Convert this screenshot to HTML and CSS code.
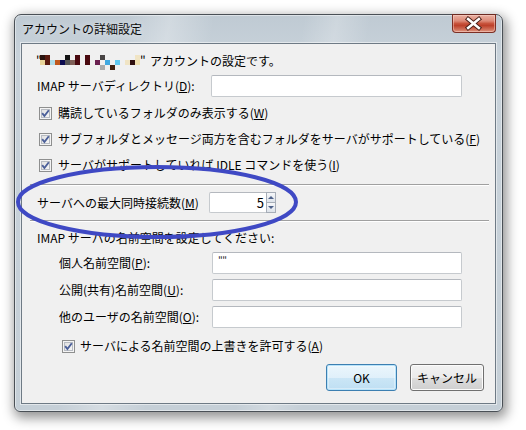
FILE: index.html
```html
<!DOCTYPE html>
<html lang="ja">
<head>
<meta charset="utf-8">
<title>アカウントの詳細設定</title>
<link rel="stylesheet" href="styles.css">
</head>
<body>
<div class="window">
  <div class="titlebar">
    <span class="title">アカウントの詳細設定</span>
    <div class="close">
      <svg width="44" height="19" viewBox="0 0 44 19">
        <path d="M16.5 5 L27.5 14 M27.5 5 L16.5 14" stroke="#4a2018" stroke-width="4.6" stroke-linecap="square" fill="none"/>
        <path d="M16.5 5 L27.5 14 M27.5 5 L16.5 14" stroke="#ffffff" stroke-width="2.6" stroke-linecap="square" fill="none"/>
      </svg>
    </div>
  </div>
  <div class="client">
    <div class="acct">
      <span class="q">"</span>
      <svg class="mosaic" width="100" height="15" viewBox="0 0 100 15">
        <rect x="0" y="0" width="5" height="5" fill="#2a1410"/>
        <rect x="5" y="0" width="5" height="5" fill="#5a1a10"/>
        <rect x="25" y="0" width="5" height="5" fill="#141414"/>
        <rect x="35" y="0" width="5" height="5" fill="#4a0a10"/>
        <rect x="45" y="0" width="5" height="5" fill="#4a0a10"/>
        <rect x="60" y="0" width="5" height="5" fill="#484444"/>
        <rect x="95" y="0" width="5" height="5" fill="#f0e4c4"/>
        <rect x="0" y="5" width="5" height="5" fill="#e8d49a"/>
        <rect x="5" y="5" width="5" height="5" fill="#5a1a10"/>
        <rect x="10" y="5" width="5" height="5" fill="#b0dce8"/>
        <rect x="15" y="5" width="5" height="5" fill="#c0581c"/>
        <rect x="20" y="5" width="5" height="5" fill="#0c0c50"/>
        <rect x="25" y="5" width="5" height="5" fill="#555555"/>
        <rect x="30" y="5" width="5" height="5" fill="#806058"/>
        <rect x="35" y="5" width="5" height="5" fill="#4a0a10"/>
        <rect x="45" y="5" width="5" height="5" fill="#4a0a10"/>
        <rect x="55" y="5" width="5" height="5" fill="#6a2050"/>
        <rect x="65" y="5" width="5" height="5" fill="#40a8e0"/>
        <rect x="75" y="5" width="5" height="5" fill="#60c8f0"/>
        <rect x="85" y="5" width="5" height="5" fill="#f0e4c4"/>
        <rect x="90" y="5" width="5" height="5" fill="#301010"/>
        <rect x="95" y="5" width="5" height="5" fill="#f0e0b0"/>
        <rect x="60" y="10" width="5" height="5" fill="#aaaaaa"/>
        <rect x="70" y="10" width="5" height="5" fill="#402010"/>
      </svg>
      <span class="q">"</span><span class="acct-text">アカウントの設定です。</span>
    </div>

    <div class="field-row">
      <span class="label label-dir">IMAP サーバディレクトリ(<u>D</u>):</span>
      <div class="input input-dir"></div>
    </div>

    <div class="cb-row first">
      <span class="cb"><svg width="11" height="11" viewBox="0 0 11 11"><path d="M2.2 5.2 L4.4 8 L8.8 2.2" stroke="#4b5f99" stroke-width="1.9" fill="none"/></svg></span>
      <span>購読しているフォルダのみ表示する(<u>W</u>)</span>
    </div>
    <div class="cb-row">
      <span class="cb"><svg width="11" height="11" viewBox="0 0 11 11"><path d="M2.2 5.2 L4.4 8 L8.8 2.2" stroke="#4b5f99" stroke-width="1.9" fill="none"/></svg></span>
      <span>サブフォルダとメッセージ両方を含むフォルダをサーバがサポートしている(<u>F</u>)</span>
    </div>
    <div class="cb-row">
      <span class="cb"><svg width="11" height="11" viewBox="0 0 11 11"><path d="M2.2 5.2 L4.4 8 L8.8 2.2" stroke="#4b5f99" stroke-width="1.9" fill="none"/></svg></span>
      <span>サーバがサポートしていれば IDLE コマンドを使う(<u>I</u>)</span>
    </div>

    <div class="sep"></div>

    <div class="field-row">
      <span class="label label-conn">サーバへの最大同時接続数(<u>M</u>)</span>
      <div class="spin">
        <div class="spin-field">5</div>
        <div class="spin-btns">
          <span class="sb"><svg width="8" height="5" viewBox="0 0 8 5"><path d="M1 4 L4 1 L7 4 Z" fill="#4d6189"/></svg></span>
          <span class="sb"><svg width="8" height="5" viewBox="0 0 8 5"><path d="M1 1 L4 4 L7 1 Z" fill="#4d6189"/></svg></span>
        </div>
      </div>
    </div>

    <div class="sep sep2"></div>

    <div class="heading">IMAP サーバの名前空間を設定してください:</div>

    <div class="field-row ns first-ns">
      <span class="label label-ns">個人名前空間(<u>P</u>):</span>
      <div class="input input-ns"><span class="qq">""</span></div>
    </div>
    <div class="field-row ns">
      <span class="label label-ns">公開(共有)名前空間(<u>U</u>):</span>
      <div class="input input-ns"></div>
    </div>
    <div class="field-row ns">
      <span class="label label-ns">他のユーザの名前空間(<u>O</u>):</span>
      <div class="input input-ns"></div>
    </div>

    <div class="cb-row cb-override">
      <span class="cb"><svg width="11" height="11" viewBox="0 0 11 11"><path d="M2.2 5.2 L4.4 8 L8.8 2.2" stroke="#4b5f99" stroke-width="1.9" fill="none"/></svg></span>
      <span>サーバによる名前空間の上書きを許可する(<u>A</u>)</span>
    </div>

    <div class="buttons">
      <button class="btn btn-default">OK</button>
      <button class="btn btn-cancel">キャンセル</button>
    </div>
  </div>
</div>

<svg class="annotation" width="526" height="430" viewBox="0 0 526 430">
  <ellipse cx="157" cy="202" rx="139" ry="35" fill="none" stroke="#3f49c4" stroke-width="4"/>
</svg>
</body>
</html>
```

FILE: styles.css
```css
* {
  box-sizing: border-box;
}

html, body {
  margin: 0;
  padding: 0;
}

body {
  width: 526px;
  height: 430px;
  background: #ffffff;
  font-family: "Noto Sans CJK JP", "Noto Sans", sans-serif;
  font-size: 12px;
  line-height: 16px;
  color: #000000;
  padding: 14px 0 0 14px;
  position: relative;
  overflow: hidden;
}

u {
  text-decoration: underline;
  text-underline-offset: 1px;
}

.window {
  width: 489px;
  height: 398px;
  border: 1px solid #4a5056;
  border-radius: 7px 7px 6px 6px;
  background:
    linear-gradient(100deg, rgba(255,255,255,0) 20%, rgba(255,255,255,0.28) 28%, rgba(255,255,255,0) 36%, rgba(255,255,255,0) 52%, rgba(255,255,255,0.22) 58%, rgba(255,255,255,0) 64%),
    linear-gradient(to bottom, #bfcad3 0px, #c8d2da 40px, #c5cfd7 100%);
  box-shadow: 2px 4px 12px 2px rgba(0, 0, 0, 0.42), inset 0 0 0 1px rgba(255,255,255,0.45);
  padding: 0 6px 7px 6px;
  display: flex;
  flex-direction: column;
}

.titlebar {
  height: 28px;
  display: flex;
  align-items: flex-start;
  flex-shrink: 0;
}

.title {
  margin-top: 6px;
  padding-left: 1px;
  color: #0a0a0a;
  text-shadow: 0 0 6px rgba(255,255,255,0.7);
}

.close {
  margin-left: auto;
  margin-top: -1px;
  width: 44px;
  height: 19px;
  border: 1px solid #7c2f25;
  border-top-color: #6b2a22;
  border-radius: 0 0 4px 4px;
  background: linear-gradient(to bottom, #e9b0a2 0%, #dd8a78 35%, #c8543d 50%, #bd412b 62%, #d0705a 85%, #e09a84 100%);
  box-shadow: inset 0 0 0 1px rgba(255, 220, 210, 0.45);
  display: flex;
}

.close svg {
  display: block;
  margin: -1px 0 0 -1px;
}

.client {
  flex: 1;
  border: 1px solid #6e7a85;
  background: #f0f0f0;
  padding: 9px 11px 0 15px;
  display: flex;
  flex-direction: column;
  box-shadow: 0 0 0 1px rgba(255, 255, 255, 0.5);
}

.acct {
  height: 16px;
  display: flex;
  align-items: center;
  margin-left: -1px;
}

.q {
  width: 4px;
  display: inline-block;
  overflow: visible;
}

.mosaic {
  display: block;
  align-self: flex-start;
  margin-top: 2px;
}

.acct-text {
  margin-left: 6px;
}

.field-row {
  display: flex;
  align-items: center;
  height: 22px;
  margin-top: 6px;
}

.label {
  flex-shrink: 0;
  white-space: nowrap;
}

.label-dir {
  width: 174px;
}

.label-conn {
  width: 172px;
}

.label-ns {
  width: 175px;
  padding-left: 22px;
}

.field-row.ns {
  margin-top: 5px;
}

.field-row.first-ns {
  margin-top: 6px;
}

.input {
  height: 22px;
  background: #ffffff;
  border: 1px solid #c6cace;
  border-top-color: #b4b8be;
  border-radius: 2px;
}

.input-dir {
  width: 251px;
}

.input-ns {
  width: 250px;
  padding-left: 5px;
  line-height: 14px;
}

.qq {
  font-size: 10px;
  letter-spacing: -0.5px;
  color: #202020;
}

.cb-row {
  height: 26px;
  display: flex;
  align-items: center;
  padding-left: 2px;
  white-space: nowrap;
}

.cb-row.first {
  margin-top: 3px;
}

.cb {
  width: 13px;
  height: 13px;
  flex-shrink: 0;
  margin-right: 6px;
  border: 1px solid #8e8f8f;
  background: linear-gradient(to bottom right, #dcdcdc, #fbfbfb);
  box-shadow: inset 0 0 0 1px #f4f4f4, inset 0 0 0 2px #b7bbc2;
  display: flex;
  align-items: center;
  justify-content: center;
}

.cb svg {
  display: block;
}

.sep {
  height: 2px;
  margin: 6px -5px 0 -7px;
  border-top: 1px solid #a0a0a0;
  border-bottom: 1px solid #ffffff;
  flex-shrink: 0;
}

.spin {
  display: flex;
  height: 21px;
  align-self: flex-start;
}

.spin-field {
  width: 57px;
  height: 21px;
  background: #ffffff;
  border: 1px solid #c6cace;
  border-top-color: #b4b8be;
  border-right: none;
  border-radius: 2px 0 0 2px;
  text-align: right;
  padding-right: 2px;
  font-size: 13px;
  line-height: 19px;
}

.spin-btns {
  width: 10px;
  display: flex;
  flex-direction: column;
}

.sb {
  flex: 1;
  border: 1px solid #a6adb7;
  background: linear-gradient(to bottom, #f6f7f9, #dde3ea);
  display: flex;
  align-items: center;
  justify-content: center;
}

.sb + .sb {
  border-top: none;
}

.sb svg {
  display: block;
}

.sep2 {
  margin-top: 6px;
}

.heading {
  height: 16px;
  margin-top: 8px;
}

.cb-override {
  height: 18px;
  margin-top: 9px;
  padding-left: 25px;
}

.cb-override .cb {
  margin-right: 5px;
}

.buttons {
  display: flex;
  justify-content: flex-end;
  gap: 13px;
  margin-top: 9px;
}

.btn {
  height: 27px;
  font-family: "Noto Sans CJK JP", "Noto Sans", sans-serif;
  font-size: 12px;
  color: #000000;
  border-radius: 3px;
  padding: 0;
  margin: 0;
}

.btn-default {
  width: 71px;
  border: 1px solid #3c7fb1;
  background: linear-gradient(to bottom, #ebf6fc 0%, #e0f0fa 50%, #cbe6f6 51%, #bfdff3 100%);
  box-shadow: inset 0 0 0 1px #b8e3fa, inset 0 0 0 2px rgba(255,255,255,0.35);
}

.btn-cancel {
  width: 74px;
  border: 1px solid #707070;
  background: linear-gradient(to bottom, #f2f2f2 0%, #ebebeb 50%, #dddddd 51%, #cfcfcf 100%);
  box-shadow: inset 0 0 0 1px #fcfcfc;
}

.annotation {
  position: absolute;
  top: 0;
  left: 0;
  pointer-events: none;
}
```
